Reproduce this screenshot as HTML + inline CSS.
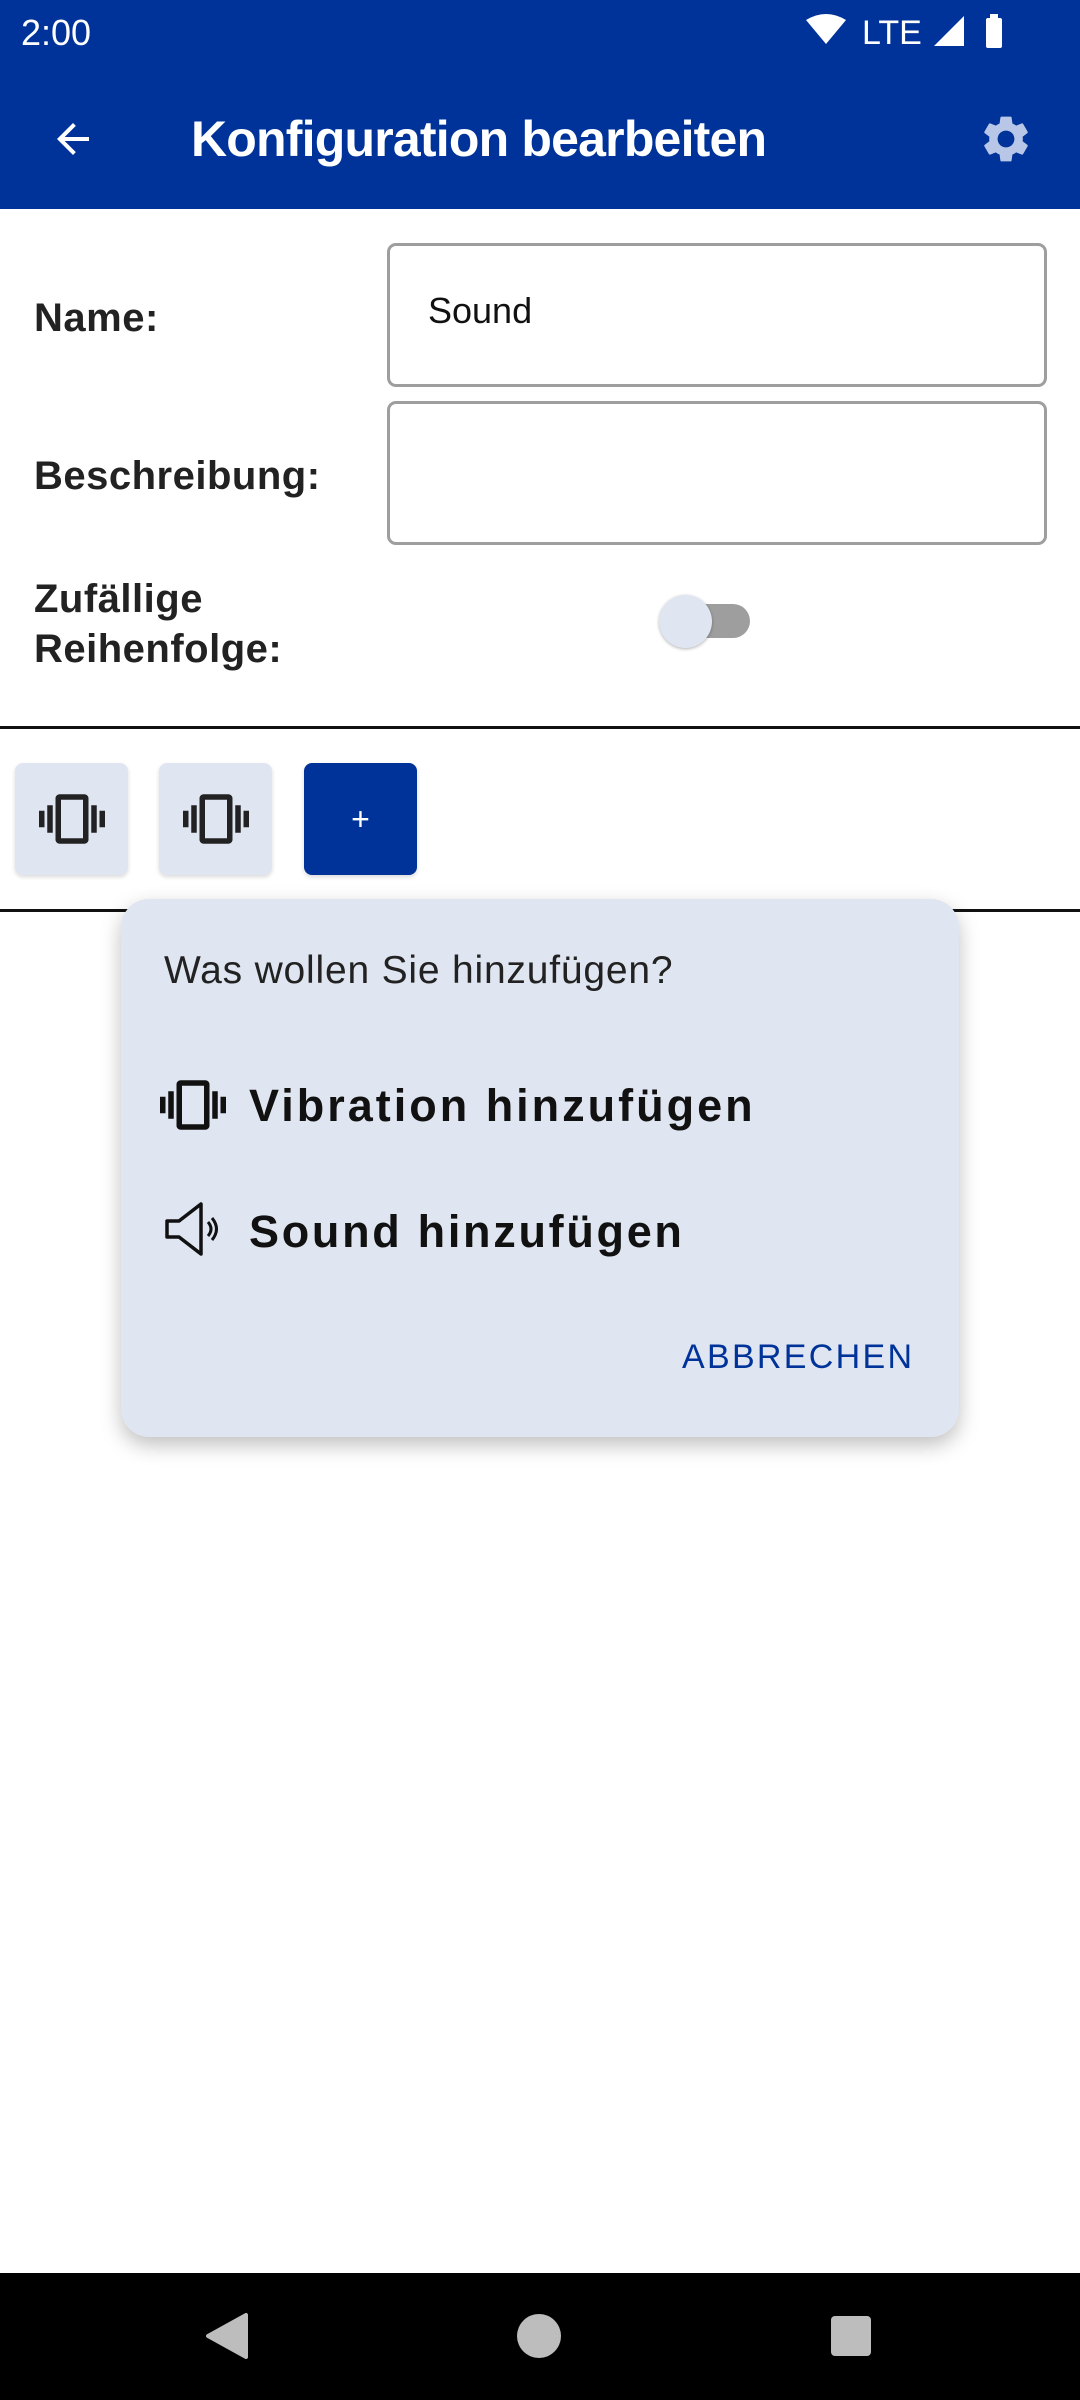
<!DOCTYPE html>
<html><head><meta charset="utf-8"><style>
*{margin:0;padding:0;box-sizing:border-box}
body{width:1080px;height:2400px;position:relative;background:#fff;font-family:"Liberation Sans",sans-serif;overflow:hidden}
.abs{position:absolute}
.lbl{position:absolute;left:34px;font-weight:bold;font-size:40px;color:#222;letter-spacing:0.5px}
.inp{position:absolute;left:387px;width:660px;height:144px;border:3px solid #9e9e9e;border-radius:9px}
.btn{position:absolute;top:763px;width:113px;height:112px;background:#e0e6f1;border-radius:8px;box-shadow:0 2px 4px rgba(0,0,0,.15);display:flex;align-items:center;justify-content:center}
</style></head><body>
<div class="abs" style="left:0;top:0;width:1080px;height:209px;background:#003399"></div>
<div class="abs" style="left:21px;top:12px;color:#fff;font-size:36px">2:00</div>
<svg class="abs" style="left:800px;top:12px" width="220" height="40" viewBox="0 0 220 40">
<path d="M6 8 Q26 -4 46 8 L26 32 Z" fill="#fff"/>
<text x="62" y="32" fill="#fff" font-family="Liberation Sans" font-size="34">LTE</text>
<path d="M134 34 L164 4 L164 34 Z" fill="#fff"/>
<rect x="186" y="6" width="16" height="30" rx="2" fill="#fff"/><rect x="190" y="2" width="8" height="5" fill="#fff"/>
</svg>
<svg class="abs" style="left:49px;top:115px" width="48" height="48" viewBox="0 0 24 24"><path d="M20 11H7.83l5.59-5.59L12 4l-8 8 8 8 1.41-1.41L7.83 13H20v-2z" fill="#fff"/></svg>
<div class="abs" style="left:191px;top:110px;color:#fff;font-size:50px;font-weight:bold;letter-spacing:-0.8px">Konfiguration bearbeiten</div>
<svg class="abs" style="left:978px;top:111px" width="56" height="56" viewBox="0 0 24 24"><path fill="#b8c7e8" d="M19.14 12.94c.04-.3.06-.61.06-.94 0-.32-.02-.64-.07-.94l2.030-1.58a.49.49 0 0 0 .12-.61l-1.92-3.32a.49.49 0 0 0-.59-.22l-2.39.96c-.5-.38-1.030-.7-1.62-.94l-.36-2.54a.48.48 0 0 0-.48-.41h-3.84c-.24 0-.43.17-.47.41l-.36 2.54c-.59.24-1.13.57-1.62.94l-2.39-.96a.48.48 0 0 0-.59.22L2.74 8.87c-.12.21-.08.47.12.61l2.03 1.58c-.05.3-.09.63-.09.94s.02.64.07.94l-2.03 1.58a.49.49 0 0 0-.12.61l1.92 3.32c.12.22.37.29.59.22l2.39-.96c.5.38 1.03.7 1.62.94l.36 2.54c.05.24.24.41.48.41h3.84c.24 0 .44-.17.47-.41l.36-2.54c.59-.24 1.13-.56 1.62-.94l2.39.96c.22.08.47 0 .59-.22l1.92-3.32c.12-.22.07-.47-.12-.61l-2.01-1.58zM12 15.6A3.6 3.6 0 1 1 12 8.4a3.6 3.6 0 0 1 0 7.2z"/></svg>

<div class="lbl" style="top:296px">Name:</div>
<div class="lbl" style="top:454px">Beschreibung:</div>
<div class="lbl" style="top:574px;line-height:50px">Zufällige<br>Reihenfolge:</div>
<div class="inp" style="top:243px"></div>
<div class="abs" style="left:428px;top:290px;font-size:36px;color:#111">Sound</div>
<div class="inp" style="top:401px"></div>
<div class="abs" style="left:680px;top:604px;width:70px;height:34px;border-radius:17px;background:#9e9e9e"></div>
<div class="abs" style="left:659px;top:595px;width:53px;height:53px;border-radius:50%;background:#e0e6f1;box-shadow:0 1px 3px rgba(0,0,0,.3)"></div>

<div class="abs" style="left:0;top:726px;width:1080px;height:3px;background:#111"></div>
<div class="abs" style="left:0;top:909px;width:1080px;height:3px;background:#111"></div>

<div class="btn" style="left:15px"><svg width="66" height="66" viewBox="0 0 24 24"><path fill="#222" d="M0 15h2V9H0v6zm3 2h2V7H3v10zm19-8v6h2V9h-2zm-3 8h2V7h-2v10zM16.5 3h-9C6.67 3 6 3.67 6 4.5v15c0 .83.67 1.5 1.5 1.5h9c.83 0 1.5-.67 1.5-1.5v-15c0-.83-.67-1.5-1.5-1.5zM16 19H8V5h8v14z"/></svg></div>
<div class="btn" style="left:159px"><svg width="66" height="66" viewBox="0 0 24 24"><path fill="#222" d="M0 15h2V9H0v6zm3 2h2V7H3v10zm19-8v6h2V9h-2zm-3 8h2V7h-2v10zM16.5 3h-9C6.67 3 6 3.67 6 4.5v15c0 .83.67 1.5 1.5 1.5h9c.83 0 1.5-.67 1.5-1.5v-15c0-.83-.67-1.5-1.5-1.5zM16 19H8V5h8v14z"/></svg></div>
<div class="btn" style="left:304px;background:#003399;color:#fff;font-size:32px">+</div>

<div class="abs" style="left:121px;top:899px;width:838px;height:538px;background:#e0e6f1;border-radius:28px;box-shadow:0 8px 20px rgba(0,0,0,.25)"></div>
<div class="abs" style="left:164px;top:949px;font-size:39px;color:#222;letter-spacing:0.8px">Was wollen Sie hinzufügen?</div>
<svg class="abs" style="left:160px;top:1072px" width="66" height="66" viewBox="0 0 24 24"><path fill="#111" d="M0 15h2V9H0v6zm3 2h2V7H3v10zm19-8v6h2V9h-2zm-3 8h2V7h-2v10zM16.5 3h-9C6.67 3 6 3.67 6 4.5v15c0 .83.67 1.5 1.5 1.5h9c.83 0 1.5-.67 1.5-1.5v-15c0-.83-.67-1.5-1.5-1.5zM16 19H8V5h8v14z"/></svg>
<div class="abs" style="left:249px;top:1080px;font-size:45px;font-weight:bold;color:#111;letter-spacing:3px">Vibration hinzufügen</div>
<svg class="abs" style="left:164px;top:1202px" width="60" height="56" viewBox="0 0 60 56"><path d="M3 19 H15 L37 2 V52 L15 35 H3 Z" fill="none" stroke="#111" stroke-width="3.5" stroke-linejoin="round"/><path d="M44 20 Q50 27 44 34" fill="none" stroke="#111" stroke-width="3"/><path d="M48 16 Q57 27 48 38" fill="none" stroke="#111" stroke-width="3"/></svg>
<div class="abs" style="left:249px;top:1206px;font-size:45px;font-weight:bold;color:#111;letter-spacing:2.7px">Sound hinzufügen</div>
<div class="abs" style="left:682px;top:1338px;font-size:34px;color:#003399;letter-spacing:2.3px;font-weight:500">ABBRECHEN</div>

<div class="abs" style="left:0;top:2273px;width:1080px;height:127px;background:#000"></div>
<svg class="abs" style="left:0;top:2273px" width="1080" height="127">
<path d="M208 63 L246 42 L246 84 Z" fill="#bdbdbd" stroke="#bdbdbd" stroke-width="4" stroke-linejoin="round"/>
<circle cx="539" cy="63" r="22" fill="#bdbdbd"/>
<rect x="831" y="43" width="40" height="40" rx="4" fill="#bdbdbd"/>
</svg>
</body></html>
